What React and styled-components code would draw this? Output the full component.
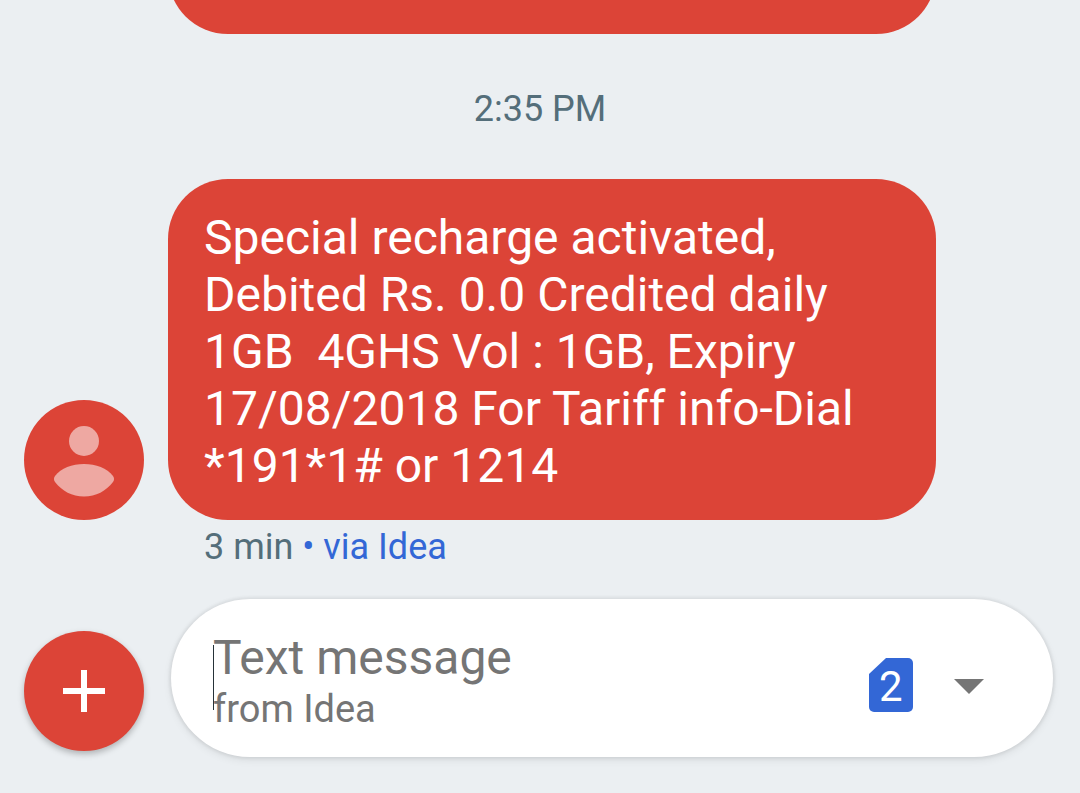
import React, { useState } from "react";
import styled, { createGlobalStyle } from "styled-components";

const GlobalStyle = createGlobalStyle`
  * {
    box-sizing: border-box;
  }

  body {
    margin: 0;
    background: #ebeff2;
    font-family: Roboto, "Noto Sans", sans-serif;
  }
`;

const Screen = styled.main`
  height: 100vh;
  display: flex;
  flex-direction: column;
`;

// newest message sits at the bottom, older ones run off the top
const Thread = styled.section`
  flex: 1;
  min-height: 0;
  overflow: hidden;
  display: flex;
  flex-direction: column;
  justify-content: flex-end;
`;

const MessageRow = styled.div`
  flex-shrink: 0;
  display: grid;
  grid-template-columns: 120px 1fr;
  column-gap: 24px;
  align-items: end;
  padding: 0 144px 0 24px;
`;

const Avatar = styled.svg`
  display: block;
  width: 120px;
  height: 120px;
`;

const Bubble = styled.p`
  grid-column: 2;
  min-height: 120px;
  margin: 0;
  padding: 30px 36px 26px;
  border-radius: 60px;
  background: #dc4437;
  color: #ffffff;
  font-size: 48px;
  line-height: 57px;
  white-space: pre-wrap;
`;

const Timestamp = styled.time`
  flex-shrink: 0;
  padding: 53px 0 48px;
  color: #546e7a;
  font-size: 36px;
  line-height: 44px;
  text-align: center;
`;

const Meta = styled.div`
  flex-shrink: 0;
  padding: 5px 24px 30px 204px;
  color: #546e7a;
  font-size: 36px;
  line-height: 44px;
`;

const Via = styled.span`
  color: #3367d6;
`;

const Composer = styled.form`
  display: flex;
  align-items: flex-end;
  gap: 27px;
  padding: 0 27px 36px 24px;
`;

const AddButton = styled.button`
  flex-shrink: 0;
  width: 120px;
  height: 120px;
  margin-bottom: 6px;
  padding: 0;
  border: none;
  border-radius: 50%;
  background: #dc4437;
  box-shadow: 0 3px 6px rgba(0, 0, 0, 0.26);
  cursor: pointer;

  svg {
    display: block;
    width: 120px;
    height: 120px;
  }
`;

const InputPill = styled.div`
  flex: 1;
  min-width: 0;
  display: flex;
  align-items: center;
  padding: 30px 69px 25px 42px;
  border-radius: 79px;
  background: #ffffff;
  box-shadow: 0 3px 8px rgba(0, 0, 0, 0.08), 0 0 3px 2px rgba(0, 0, 0, 0.06);
`;

const Field = styled.div`
  flex: 1;
  min-width: 0;
  position: relative;
`;

const Hint = styled.label`
  display: block;
  visibility: ${(props) => (props.$hidden ? "hidden" : "visible")};
  color: #757575;
  font-size: 48px;
  line-height: 57px;
  cursor: text;
`;

const HintSub = styled.span`
  display: block;
  font-size: 38px;
  line-height: 46px;
`;

const Caret = styled.span`
  position: absolute;
  left: 0;
  top: 16px;
  width: 1px;
  height: 65px;
  background: #263238;
`;

// lies over the two-line hint
const MessageInput = styled.textarea`
  position: absolute;
  inset: 0;
  width: 100%;
  height: 100%;
  padding: 0;
  border: none;
  outline: none;
  resize: none;
  background: transparent;
  color: #263238;
  font: inherit;
  font-size: 48px;
  line-height: 57px;
`;

const SimPicker = styled.label`
  display: grid;
  grid-template-columns: 44px 30px;
  column-gap: 41px;
  align-items: center;
  margin-top: 9px;
`;

const SimIcon = styled.svg`
  grid-area: 1 / 1;
  width: 44px;
  height: 54px;
`;

const ArrowIcon = styled.svg`
  grid-area: 1 / 2;
  width: 30px;
  height: 18px;
`;

const SimSelect = styled.select`
  grid-area: 1 / 1 / 2 / 3;
  width: 100%;
  height: 54px;
  padding: 3px 0 0 10px;
  border: none;
  outline: none;
  appearance: none;
  background: transparent;
  color: #ffffff;
  font-family: inherit;
  font-size: 42px;
  line-height: 50px;
  cursor: pointer;

  option {
    color: #263238;
  }
`;

const message =
  "Special recharge activated, Debited Rs. 0.0 Credited daily 1GB  4GHS Vol : 1GB, Expiry 17/08/2018 For Tariff info-Dial *191*1# or 1214";

const App = () => {
  const [text, setText] = useState("");
  const [sim, setSim] = useState("2");

  return (
    <Screen>
      <GlobalStyle />

      <Thread>
        <MessageRow>
          <Bubble />
        </MessageRow>

        <Timestamp dateTime="14:35">2:35 PM</Timestamp>

        <MessageRow>
          <Avatar viewBox="0 0 120 120" aria-hidden="true">
            <circle cx="60" cy="60" r="60" fill="#dc4437" />
            <circle cx="60" cy="41" r="15" fill="#eea8a2" />
            <path
              d="M31 76C37 68 48 64 60 64s23 4 29 12c1.400 2 1.400 4 0 6C82 91 72 96.500 60 96.500S38 91 31 82c-1.400-2-1.400-4 0-6z"
              fill="#eea8a2"
            />
          </Avatar>
          <Bubble>{message}</Bubble>
        </MessageRow>

        <Meta>
          3 min <Via>• via Idea</Via>
        </Meta>
      </Thread>

      <Composer onSubmit={(e) => e.preventDefault()}>
        <AddButton type="button" aria-label="Add attachment">
          <svg viewBox="0 0 120 120" aria-hidden="true">
            <path d="M57 39h6v18h18v6H63v18h-6V63H39v-6h18z" fill="#ffffff" />
          </svg>
        </AddButton>

        <InputPill>
          <Field>
            <Hint htmlFor="message" $hidden={text.length > 0}>
              Text message
              <HintSub>from Idea</HintSub>
              <Caret />
            </Hint>
            <MessageInput
              id="message"
              value={text}
              onChange={(e) => setText(e.target.value)}
            />
          </Field>

          <SimPicker>
            <SimIcon viewBox="0 0 44 54" aria-hidden="true">
              <path
                d="M17 0h22a5 5 0 0 1 5 5v44a5 5 0 0 1-5 5H5a5 5 0 0 1-5-5V16z"
                fill="#3367d6"
              />
            </SimIcon>
            <ArrowIcon viewBox="0 0 30 18" aria-hidden="true">
              <path d="M0 3h30L15 18z" fill="#757575" />
            </ArrowIcon>
            <SimSelect
              aria-label="SIM card"
              value={sim}
              onChange={(e) => setSim(e.target.value)}
            >
              <option value="1">1</option>
              <option value="2">2</option>
            </SimSelect>
          </SimPicker>
        </InputPill>
      </Composer>
    </Screen>
  );
};

export default App;
